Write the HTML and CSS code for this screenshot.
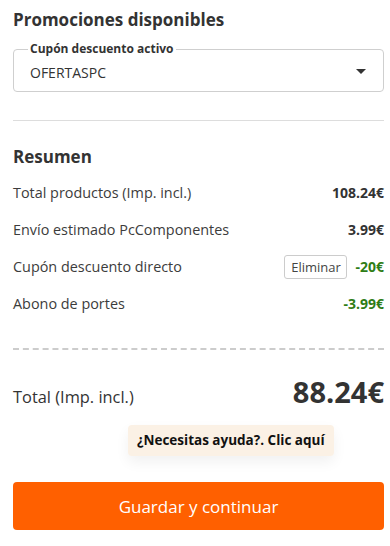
FILE: index.html
```html
<!DOCTYPE html>
<html lang="es">
<head>
    <meta charset="UTF-8">
    <meta name="viewport" content="width=device-width, initial-scale=1.0">
    <title>Resumen del pedido</title>
    <link rel="stylesheet" href="styles.css">
</head>
<body>
    <div class="checkout">
        <!-- Promociones -->
        <h2 class="section-title">Promociones disponibles</h2>
        <div class="coupon-select">
            <span class="coupon-label">Cupón descuento activo</span>
            <span class="coupon-value">OFERTASPC</span>
            <span class="caret"></span>
        </div>

        <hr class="divider">

        <!-- Resumen -->
        <h2 class="section-title summary-title">Resumen</h2>
        <div class="summary">
            <div class="row">
                <span class="label">Total productos (Imp. incl.)</span>
                <span class="value">108.24€</span>
            </div>
            <div class="row">
                <span class="label">Envío estimado PcComponentes</span>
                <span class="value">3.99€</span>
            </div>
            <div class="row">
                <span class="label">Cupón descuento directo</span>
                <span class="value-group">
                    <button class="remove-button">Eliminar</button>
                    <span class="value discount">-20€</span>
                </span>
            </div>
            <div class="row">
                <span class="label">Abono de portes</span>
                <span class="value discount">-3.99€</span>
            </div>
        </div>

        <div class="dashed"></div>

        <div class="total-row">
            <span class="total-label">Total (Imp. incl.)</span>
            <span class="total-value">88.24€</span>
        </div>

        <div class="help-wrap">
            <div class="help">¿Necesitas ayuda?. Clic aquí</div>
        </div>

        <button class="continue-button">Guardar y continuar</button>
    </div>
</body>
</html>
```

FILE: styles.css
```css
body {
    margin: 0;
    font-family: "Open Sans", "Liberation Sans", Arial, sans-serif;
    background-color: #ffffff;
    color: #333333;
}

.checkout {
    padding: 8px 6px 0 13px;
}

.section-title {
    margin: 0;
    font-size: 17px;
    line-height: 24px;
    font-weight: 700;
    color: #333333;
}

/* Selector de cupón */
.coupon-select {
    position: relative;
    margin-top: 17px;
    padding: 0 17px 0 16px;
    height: 43px;
    box-sizing: border-box;
    border: 1px solid #cfcfcf;
    border-radius: 4px;
    display: flex;
    align-items: center;
    justify-content: space-between;
}

.coupon-label {
    position: absolute;
    top: -9px;
    left: 14px;
    padding: 0 2px;
    background-color: #ffffff;
    font-size: 12px;
    font-weight: 700;
    line-height: 16px;
    color: #333333;
}

.coupon-value {
    font-size: 14px;
    color: #333333;
    margin-top: 3px;
}

.caret {
    width: 0;
    height: 0;
    border-left: 5px solid transparent;
    border-right: 5px solid transparent;
    border-top: 5px solid #333333;
    margin-top: 1px;
}

.divider {
    margin: 28px 0 0 0;
    border: none;
    border-top: 1px solid #dddddd;
}

.summary-title {
    margin-top: 24px;
}

/* Filas del resumen */
.summary {
    margin-top: 5px;
    display: flex;
    flex-direction: column;
}

.row {
    display: flex;
    justify-content: space-between;
    align-items: center;
    height: 37px;
    font-size: 14.4px;
}

.label {
    color: #3c3c3c;
}

.value {
    font-weight: 700;
    font-size: 14px;
    color: #333333;
}

.value-group {
    display: flex;
    align-items: center;
    gap: 8px;
}

.discount {
    color: #2f7d16;
}

.remove-button {
    font-family: inherit;
    font-size: 13px;
    color: #444444;
    background-color: #ffffff;
    border: 1px solid #cccccc;
    border-radius: 3px;
    height: 24px;
    width: 63px;
    padding: 0;
    margin-top: 1px;
}

.dashed {
    margin-top: 26px;
    height: 0;
    border-top: 2px dashed #cccccc;
}

.total-row {
    display: flex;
    justify-content: space-between;
    align-items: baseline;
    margin-top: 22px;
}

.total-label {
    font-size: 16.4px;
    color: #333333;
}

.total-value {
    font-size: 29px;
    font-weight: 700;
    line-height: 40px;
    color: #333333;
}

/* Ayuda */
.help-wrap {
    display: flex;
    margin-top: 13px;
    padding-left: 115px;
}

.help {
    background-color: #fbf1e5;
    border-radius: 4px;
    padding: 0 9px;
    height: 31px;
    line-height: 31px;
    font-size: 13.5px;
    font-weight: 700;
    color: #111111;
    box-shadow: 0 6px 14px rgba(0, 0, 0, 0.06);
}

.continue-button {
    display: block;
    width: 100%;
    margin-top: 26px;
    height: 48px;
    border: none;
    border-radius: 4px;
    background-color: #ff6000;
    color: #ffffff;
    font-family: inherit;
    font-size: 17px;
    cursor: pointer;
}
```
